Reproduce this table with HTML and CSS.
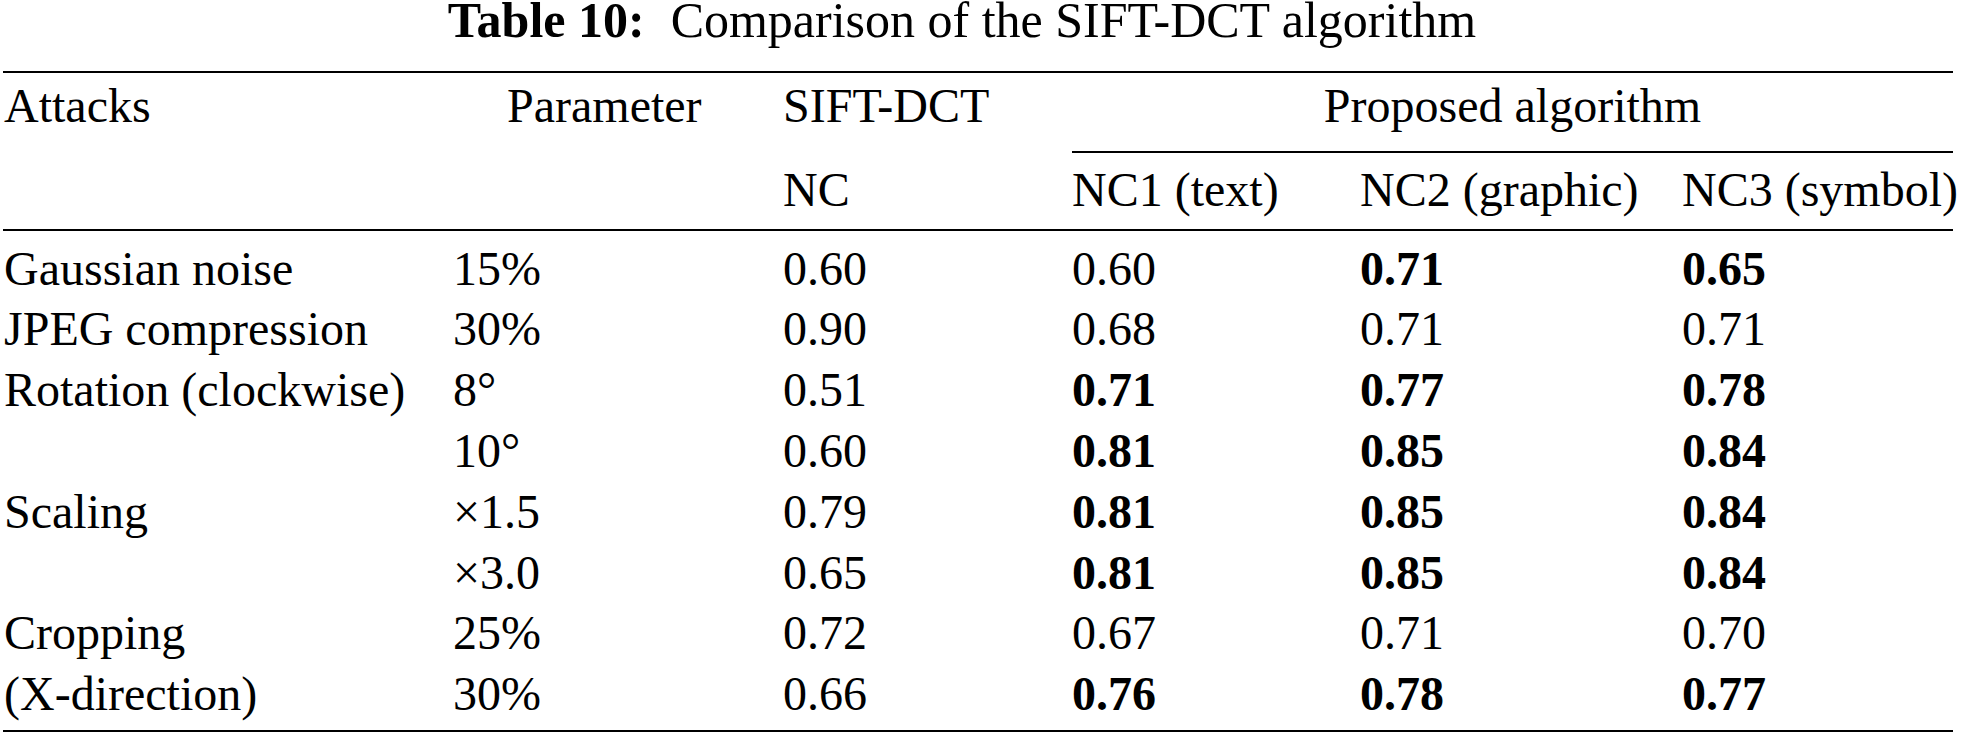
FILE: index.html
```html
<!DOCTYPE html>
<html lang="en">
<head>
<meta charset="utf-8">
<title>Table 10: Comparison of the SIFT-DCT algorithm</title>
<link rel="stylesheet" href="styles.css">
</head>
<body>
<div class="page">
  <div class="caption"><span class="cap-label">Table 10:</span>Comparison of the SIFT-DCT algorithm</div>
  <table class="results">
    <colgroup>
      <col class="c-attack">
      <col class="c-param">
      <col class="c-sift">
      <col class="c-nc1">
      <col class="c-nc2">
      <col class="c-nc3">
    </colgroup>
    <thead>
      <tr class="head1">
        <th class="h-attack">Attacks</th>
        <th class="h-param">Parameter</th>
        <th>SIFT-DCT</th>
        <th colspan="3" class="h-proposed">Proposed algorithm</th>
      </tr>
      <tr class="head2">
        <th></th>
        <th></th>
        <th>NC</th>
        <th>NC1 (text)</th>
        <th>NC2 (graphic)</th>
        <th>NC3 (symbol)</th>
      </tr>
    </thead>
    <tbody>
      <tr class="first">
        <td class="attack">Gaussian noise</td>
        <td>15%</td>
        <td>0.60</td>
        <td>0.60</td>
        <td><b>0.71</b></td>
        <td><b>0.65</b></td>
      </tr>
      <tr>
        <td class="attack">JPEG compression</td>
        <td>30%</td>
        <td>0.90</td>
        <td>0.68</td>
        <td>0.71</td>
        <td>0.71</td>
      </tr>
      <tr>
        <td class="attack" rowspan="2">Rotation (clockwise)</td>
        <td>8°</td>
        <td>0.51</td>
        <td><b>0.71</b></td>
        <td><b>0.77</b></td>
        <td><b>0.78</b></td>
      </tr>
      <tr>
        <td>10°</td>
        <td>0.60</td>
        <td><b>0.81</b></td>
        <td><b>0.85</b></td>
        <td><b>0.84</b></td>
      </tr>
      <tr>
        <td class="attack" rowspan="2">Scaling</td>
        <td>×1.5</td>
        <td>0.79</td>
        <td><b>0.81</b></td>
        <td><b>0.85</b></td>
        <td><b>0.84</b></td>
      </tr>
      <tr>
        <td>×3.0</td>
        <td>0.65</td>
        <td><b>0.81</b></td>
        <td><b>0.85</b></td>
        <td><b>0.84</b></td>
      </tr>
      <tr>
        <td class="attack" rowspan="2">Cropping<br>(X-direction)</td>
        <td>25%</td>
        <td>0.72</td>
        <td>0.67</td>
        <td>0.71</td>
        <td>0.70</td>
      </tr>
      <tr class="last">
        <td>30%</td>
        <td>0.66</td>
        <td><b>0.76</b></td>
        <td><b>0.78</b></td>
        <td><b>0.77</b></td>
      </tr>
    </tbody>
  </table>
</div>
</body>
</html>
```
FILE: styles.css
```css
html, body {
  margin: 0;
  padding: 0;
  background: #ffffff;
}

body {
  font-family: "Liberation Serif", "Times New Roman", serif;
  color: #000000;
}

.page {
  width: 1962px;
}

.caption {
  font-size: 50px;
  line-height: 48px;
  height: 48px;
  margin-top: -4px;
  text-align: center;
  padding-right: 38px;
  white-space: nowrap;
}

.cap-label {
  font-weight: bold;
  margin-right: 26px;
}

.results {
  margin: 27px 0 0 3px;
  width: 1950px;
  table-layout: fixed;
  border-collapse: separate;
  border-spacing: 0;
  border-top: 2px solid #000;
  border-bottom: 2px solid #000;
  font-size: 48px;
  line-height: 60.8px;
}

.c-attack { width: 450px; }
.c-param { width: 330px; }
.c-sift { width: 289px; }
.c-nc1 { width: 288px; }
.c-nc2 { width: 322px; }
.c-nc3 { width: 271px; }

.results th,
.results td {
  padding: 0;
  text-align: left;
  vertical-align: top;
  white-space: nowrap;
  font-weight: normal;
}

.results b {
  font-weight: bold;
}

.head1 th {
  padding-top: 3px;
}

.results .h-attack {
  padding-left: 1px;
}

.results .h-param {
  padding-left: 54px;
}

.results .h-proposed {
  text-align: center;
  padding-bottom: 14px;
  border-bottom: 2px solid #000;
}

.head2 th {
  padding-top: 7px;
  padding-bottom: 8px;
  border-bottom: 2px solid #000;
}

.results .attack {
  padding-left: 1px;
}

.first td {
  padding-top: 8px;
}

.last td {
  padding-bottom: 5px;
}
```
